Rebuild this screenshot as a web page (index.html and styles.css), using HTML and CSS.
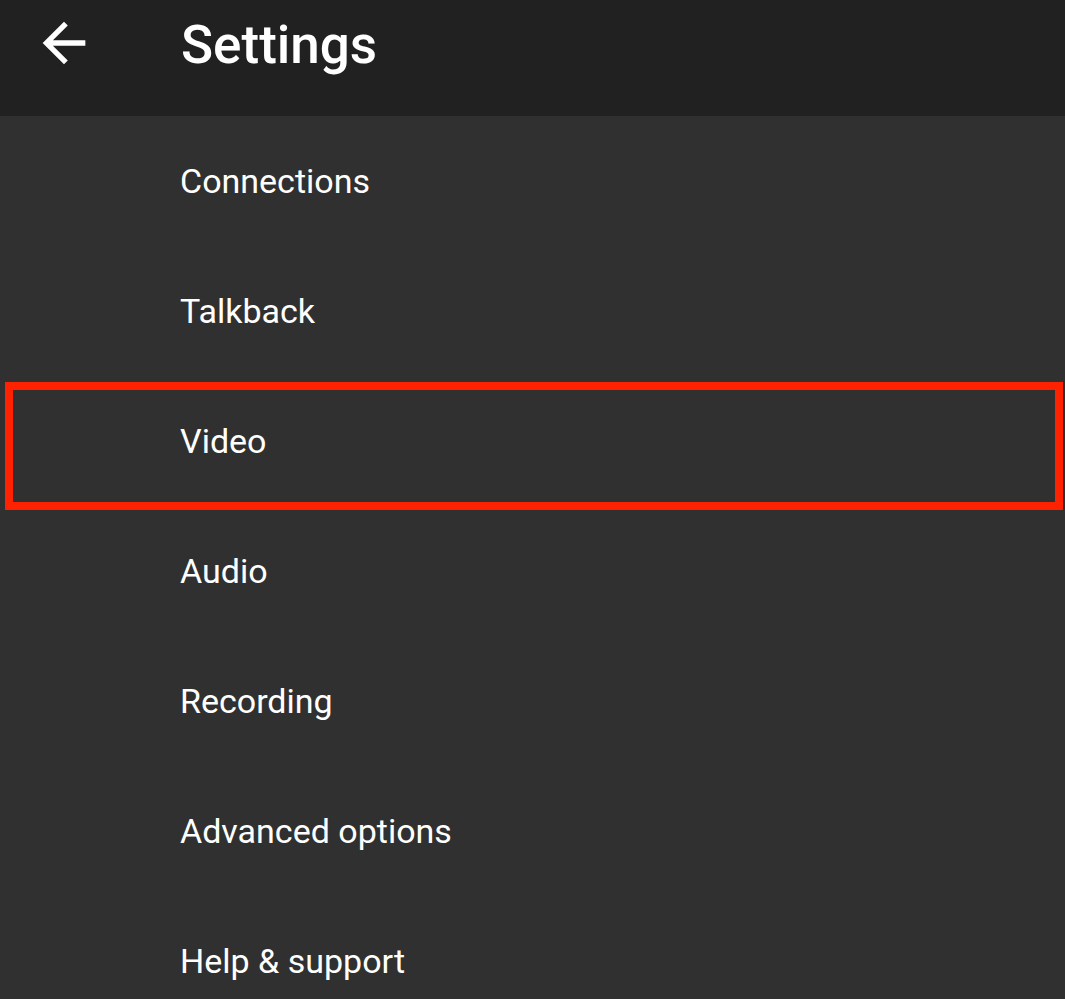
FILE: index.html
```html
<!DOCTYPE html>
<html>
<head>
<meta charset="utf-8">
<link rel="stylesheet" href="styles.css">
</head>
<body>
<header class="appbar">
  <div class="back">
    <svg viewBox="0 0 24 24" width="64" height="64"><path fill="#ffffff" d="M20 11H7.83l5.59-5.59L12 4l-8 8 8 8 1.41-1.41L7.83 13H20v-2z"/></svg>
  </div>
  <h1 class="title">Settings</h1>
</header>
<ul class="menu">
  <li class="item">Connections</li>
  <li class="item">Talkback</li>
  <li class="item highlighted">Video</li>
  <li class="item">Audio</li>
  <li class="item">Recording</li>
  <li class="item">Advanced options</li>
  <li class="item">Help &amp; support</li>
</ul>
</body>
</html>
```
FILE: styles.css
```css
html, body {
  margin: 0;
  padding: 0;
  background: #303030;
  font-family: Roboto, "Noto Sans", sans-serif;
  color: #ffffff;
  overflow: hidden;
}
.appbar {
  height: 116px;
  background: #212121;
  display: flex;
  align-items: flex-start;
}
.back {
  width: 64px;
  height: 64px;
  margin: 11px 0 0 32px;
  display: flex;
}
.title {
  margin: 0 0 0 85px;
  font-size: 53px;
  font-weight: 500;
  line-height: 90px;
  letter-spacing: 0;
}
.menu {
  list-style: none;
  margin: 0;
  padding: 0;
}
.item {
  height: 130px;
  display: flex;
  align-items: center;
  padding-left: 180px;
  font-size: 34px;
  position: relative;
}
.highlighted::after {
  content: "";
  position: absolute;
  left: 5px;
  top: 6px;
  width: 1058px;
  height: 128px;
  box-sizing: border-box;
  border: 8px solid #ff2200;
}
```
